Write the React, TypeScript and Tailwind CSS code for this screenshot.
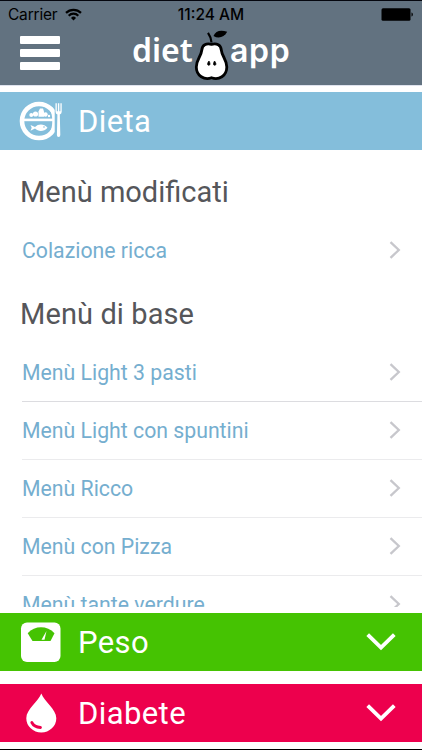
import type { ReactNode } from "react";

const BASE_MENUS = [
  { label: "Menù Light 3 pasti", line: "border-[#dcdce0]" },
  { label: "Menù Light con spuntini", line: "border-[#ebebed]" },
  { label: "Menù Ricco", line: "border-[#ebebed]" },
  { label: "Menù con Pizza", line: "border-[#ebebed]" },
  { label: "Menù tante verdure", line: "border-transparent" },
];

function StatusBar() {
  return (
    <div className="grid h-[28px] grid-cols-3 items-center pr-2 pl-[8px] text-[15.500px] text-black">
      <div className="flex items-center gap-[8px]">
        <span className="tracking-[-0.2px]">Carrier</span>
        <svg className="mb-[2px]" width="17" height="13" viewBox="0 0 17 13" fill="none" stroke="#000" strokeWidth="2.200">
          <path d="M1 4.900a10.600 10.600 0 0 1 15 0M3.700 7.700a6.800 6.800 0 0 1 9.600 0" />
          <path d="M8.500 12.500 6 9.900a3.500 3.500 0 0 1 5 0Z" fill="#000" stroke="none" />
        </svg>
      </div>
      <span className="text-center font-medium whitespace-nowrap">11:24 AM</span>
      <svg className="mb-[2px] justify-self-end" width="33" height="13" viewBox="0 0 33 13">
        <rect x="0.500" y="0.300" width="29" height="12.400" rx="1.500" />
        <path d="M30.500 4.500c1.800.5 1.800 3.500 0 4Z" />
      </svg>
    </div>
  );
}

function PearLogo() {
  return (
    <svg className="shrink-0" width="36" height="52" viewBox="0 0 36 52">
      <path
        d="M18.500 15.300c5.500-1.300 9.300.7 9.800 5.700.6 6.500 5.500 9.500 5.500 17 0 9-8 13.500-15.300 10.800C11.500 51.500 3.300 47 3.300 38c0-7.500 4.900-10.500 5.500-17 .5-5 4.200-7 9.700-5.700Z"
        fill="#fff"
        stroke="#000"
        strokeWidth="2.800"
      />
      <path d="M18.500 13.500C18.200 9.500 17 6.500 15 3.800" fill="none" stroke="#000" strokeWidth="2.200" />
      <path d="M20.500 7c2-5.500 7.500-6.500 13.700-4.200-3 5.700-8.700 7.200-13.700 4.200Z" />
      <path d="M16 32c1.500 2.500 1.300 4.300-.2 4.300s-1.800-2 .2-4.300ZM21.500 32c-1.500 2.500-1.300 4.300.2 4.300s1.800-2-.2-4.300Z" stroke="#000" strokeWidth=".7" />
    </svg>
  );
}

function PlateIcon() {
  return (
    <svg width="44" height="42" viewBox="0 0 44 42" fill="#fff">
      <circle cx="20" cy="21" r="17" fill="none" stroke="#fff" strokeWidth="4.600" />
      <path d="M4 18.600h32v2.600H4Z" />
      <path d="M31 10c3 5 3 17 0 22l5-1V11Z" />
      {/* vegetables on the upper half */}
      <circle cx="12.300" cy="15" r="2" />
      <circle cx="16.500" cy="14" r="2.600" />
      <path d="M19.500 16.800v-5.300l1.500-3h3l1 3v5.300Z" />
      <circle cx="26.500" cy="14.500" r="2.200" />
      <circle cx="30" cy="16" r="1.200" />
      {/* fish */}
      <path d="M11.500 25l4.500 2c3.500-3.500 9-3.300 12.500.7-3.500 4-9 4.200-12.500.8l-4.500 2.200 1.200-2.900Z" />
      <circle cx="25" cy="27" r=".8" fill="#84bedb" />
      <path d="M35.700 2H44v38h-8.300Z" fill="#84bedb" />
      <path d="M36.500 3.300v8.500q0 2 1.900 2.700l-.5 20.500q0 2 1.700 2t1.700-2l-.5-20.500q1.900-.7 1.900-2.700V3.300h-1.300v8h-1.100v-8h-1.400v8h-1.100v-8Z" />
    </svg>
  );
}

function ScaleIcon() {
  return (
    <svg width="44" height="42" viewBox="0 0 44 42">
      <rect x="2" y="1.500" width="39.500" height="39.500" rx="6" fill="#fff" />
      <path d="M8.700 12.200C16 4.300 28 4.300 35.500 12.200L31.500 20h-18Z" fill="#45c302" />
      <path d="M22.500 18.800 27.500 10 25.500 18.800Z" fill="#fff" />
    </svg>
  );
}

function DropIcon() {
  return (
    <svg width="44" height="42" viewBox="0 0 44 42">
      <path d="M22.300 1.500c3 8.300 15 15.500 15 24.700a15 14.300 0 0 1-30 0C7.300 17 19.300 9.800 22.300 1.500Z" fill="#fff" />
      <path d="M12.800 30.500c1.500 3 4.500 4.700 8.700 5" fill="none" stroke="#ed004d" strokeWidth="2.800" strokeLinecap="round" />
    </svg>
  );
}

function SectionBar({ color, icon, title, collapsed }: { color: string; icon: ReactNode; title: string; collapsed?: boolean }) {
  return (
    <div className={`flex shrink-0 items-center pr-[26px] pl-[19px] ${color}`}>
      {icon}
      <span className="ml-[15px] flex-1 text-[31px] leading-none tracking-[0.4px] text-white">{title}</span>
      {collapsed && (
        <svg width="30" height="18" viewBox="0 0 30 18" fill="none" stroke="#fff" strokeWidth="3.800">
          <path d="m1.700 1.700 13.300 13 13.300-13" />
        </svg>
      )}
    </div>
  );
}

function MenuRow({ label, line = "border-transparent" }: { label: string; line?: string }) {
  return (
    <div className={`ml-[22px] flex h-[58px] shrink-0 items-center justify-between border-b pr-[21px] ${line}`}>
      <span className="text-[21.250px] text-[#75aecf]">{label}</span>
      <svg className="mb-[2px]" width="12" height="18" viewBox="0 0 12 18" fill="none" stroke="#c7c7cc" strokeWidth="2.300">
        <path d="m1.500 1.200 8.300 7.800-8.300 7.800" />
      </svg>
    </div>
  );
}

export default function App() {
  return (
    <div className="flex h-[750px] w-[422px] flex-col overflow-hidden border-b border-black bg-white font-['Roboto',sans-serif]">
      <header className="h-[85px] shrink-0 border-t border-[#05070f] bg-[#627280] font-['Inter',sans-serif]">
        <StatusBar />
        <div className="flex pl-5">
          <div className="mt-[7px] flex w-10 flex-col gap-[5px]">
            <div className="h-[8px] rounded-[1px] bg-white" />
            <div className="h-[8px] rounded-[1px] bg-white" />
            <div className="h-[8px] rounded-[1px] bg-white" />
          </div>
          <div className="ml-[72px] flex text-[32px] leading-[42px] font-semibold text-white">
            <span className="w-[61px] font-['Noto_Sans',sans-serif] whitespace-nowrap">diet</span>
            <PearLogo />
            <span className="ml-px pt-px tracking-[0.7px]">app</span>
          </div>
        </div>
      </header>

      <div className="h-[7px] shrink-0 border-t border-[#dfe3ee]" />
      <SectionBar color="bg-[#84bedb] h-[58px]" icon={<PlateIcon />} title="Dieta" />

      <main className="flex h-[457px] shrink-0 flex-col overflow-hidden">
        <h2 className="mt-[14px] ml-5 flex h-[58px] shrink-0 items-center text-[29px] text-[#55565a]">Menù modificati</h2>
        <MenuRow label="Colazione ricca" />
        <h2 className="mt-[6px] ml-5 flex h-[58px] shrink-0 items-center text-[29px] tracking-[0.1px] text-[#55565a]">Menù di base</h2>
        {BASE_MENUS.map((m) => (
          <MenuRow key={m.label} label={m.label} line={m.line} />
        ))}
      </main>

      <div className="mt-[6px] flex flex-col gap-[13px]">
        <SectionBar color="bg-[#45c302] h-[58px]" icon={<ScaleIcon />} title="Peso" collapsed />
        <SectionBar color="bg-[#ed004d] h-[58px]" icon={<DropIcon />} title="Diabete" collapsed />
      </div>
    </div>
  );
}
